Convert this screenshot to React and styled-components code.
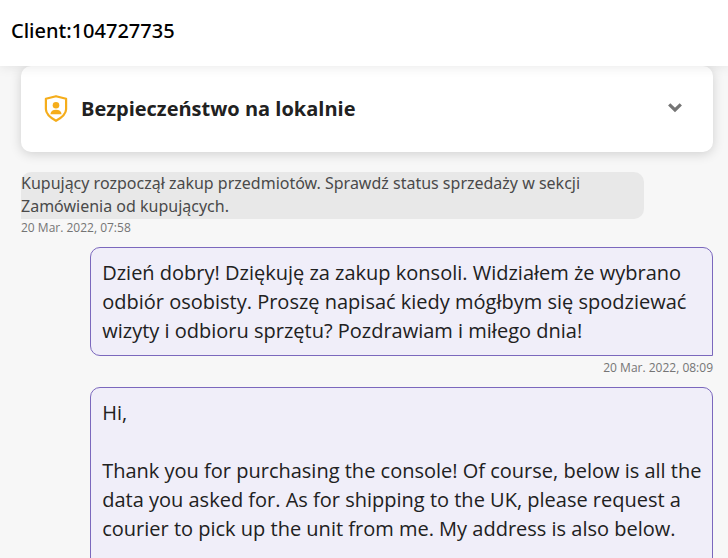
import React, { useState } from "react";
import styled, { createGlobalStyle } from "styled-components";

const GlobalStyle = createGlobalStyle`
  * {
    box-sizing: border-box;
  }
  body {
    margin: 0;
    background: #f7f7f7;
    font-family: "Open Sans", "Noto Sans", sans-serif;
    color: #212121;
  }
`;

const Page = styled.div`
  display: flex;
  flex-direction: column;
  height: 100vh;
  overflow: hidden;
`;

const Header = styled.header`
  position: relative;
  z-index: 1;
  flex: none;
  padding: 16px 11px 20px;
  background: #ffffff;
  box-shadow: 0 0 12px rgba(0, 0, 0, 0.1);
`;

const ClientName = styled.h1`
  margin: 0;
  font-family: "Noto Sans", "Open Sans", sans-serif;
  font-size: 20px;
  font-weight: 500;
  line-height: 30px;
  color: #000000;
`;

const Chat = styled.main`
  flex: 1;
  min-height: 0;
  padding: 0 15px 0 21px;
  overflow: hidden;
`;

const SafetyCard = styled.section`
  margin-bottom: 20px;
  border-radius: 10px;
  background: #ffffff;
  box-shadow: 0 2px 12px rgba(0, 0, 0, 0.16);
`;

const SafetyToggle = styled.button`
  display: flex;
  align-items: center;
  gap: 13px;
  width: 100%;
  height: 86px;
  padding: 0 30px 2px 23px;
  border: none;
  background: none;
  color: #212121;
  font-family: inherit;
  font-size: 20px;
  font-weight: 700;
  text-align: left;
  cursor: pointer;
`;

const SafetyTitle = styled.span`
  flex: 1;
`;

const Message = styled.article`
  display: flex;
  flex-direction: column;
  align-items: ${props => (props.$own ? "flex-end" : "flex-start")};
  gap: ${props => (props.$own ? "3px" : "0")};
  margin-bottom: 10px;
`;

const Notice = styled.p`
  width: 90%;
  margin: 0;
  padding-bottom: 1px;
  border-radius: 10px 10px 10px 0;
  background: #e8e8e8;
  color: #4a4a4a;
  font-family: "Noto Sans", "Open Sans", sans-serif;
  font-size: 16px;
  line-height: 23px;
`;

const Bubble = styled.p`
  width: 90%;
  margin: 0;
  padding: 10px 10px 10px 11px;
  border: 1px solid #7b68bd;
  border-radius: 10px 10px 0 10px;
  background: #f0eef9;
  font-size: 20px;
  line-height: 29px;
  white-space: pre-line;
`;

const Time = styled.time`
  color: #757575;
  font-size: 12px;
  line-height: 18px;
`;

const ShieldIcon = () => (
  <svg width="24" height="28" viewBox="0 0 24 28" aria-hidden="true">
    <path
      d="M12 2.2 22.1 4.8V15.2C22.1 20.2 18 23.4 12 26.8C6 23.4 1.9 20.2 1.9 15.2V4.8Z"
      fill="none"
      stroke="#f5ad1b"
      strokeWidth="2.2"
      strokeLinejoin="round"
    />
    <circle cx="12" cy="11.2" r="3.3" fill="#f5ad1b" />
    <path
      d="M6.4 20.2C6.7 17.3 8.8 15.8 12 15.8S17.3 17.3 17.6 20.2Z"
      fill="#f5ad1b"
    />
  </svg>
);

const ChevronIcon = () => (
  <svg width="16" height="12" viewBox="0 0 16 12" aria-hidden="true">
    <path
      d="M2.2 2.4 8 8 13.8 2.4"
      fill="none"
      stroke="#757575"
      strokeWidth="3.2"
    />
  </svg>
);

const messages = [
  {
    id: 1,
    type: "notice",
    text:
      "Kupujący rozpoczął zakup przedmiotów. Sprawdź status sprzedaży w sekcji Zamówienia od kupujących.",
    time: "20 Mar. 2022, 07:58"
  },
  {
    id: 2,
    type: "own",
    text:
      "Dzień dobry! Dziękuję za zakup konsoli. Widziałem że wybrano odbiór osobisty. Proszę napisać kiedy mógłbym się spodziewać wizyty i odbioru sprzętu? Pozdrawiam i miłego dnia!",
    time: "20 Mar. 2022, 08:09"
  },
  {
    id: 3,
    type: "own",
    text:
      "Hi,\n\nThank you for purchasing the console! Of course, below is all the data you asked for. As for shipping to the UK, please request a courier to pick up the unit from me. My address is also below.\n\n\n"
  }
];

const App = () => {
  const [open, setOpen] = useState(false);

  return (
    <Page>
      <GlobalStyle />
      <Header>
        <ClientName>Client:104727735</ClientName>
      </Header>
      <Chat>
        <SafetyCard>
          <SafetyToggle
            type="button"
            aria-expanded={open}
            onClick={() => setOpen(!open)}
          >
            <ShieldIcon />
            <SafetyTitle>Bezpieczeństwo na lokalnie</SafetyTitle>
            <ChevronIcon />
          </SafetyToggle>
        </SafetyCard>
        {messages.map(({ id, type, text, time }) => (
          <Message key={id} $own={type === "own"}>
            {type === "own" ? <Bubble>{text}</Bubble> : <Notice>{text}</Notice>}
            {time && <Time>{time}</Time>}
          </Message>
        ))}
      </Chat>
    </Page>
  );
};

export default App;
